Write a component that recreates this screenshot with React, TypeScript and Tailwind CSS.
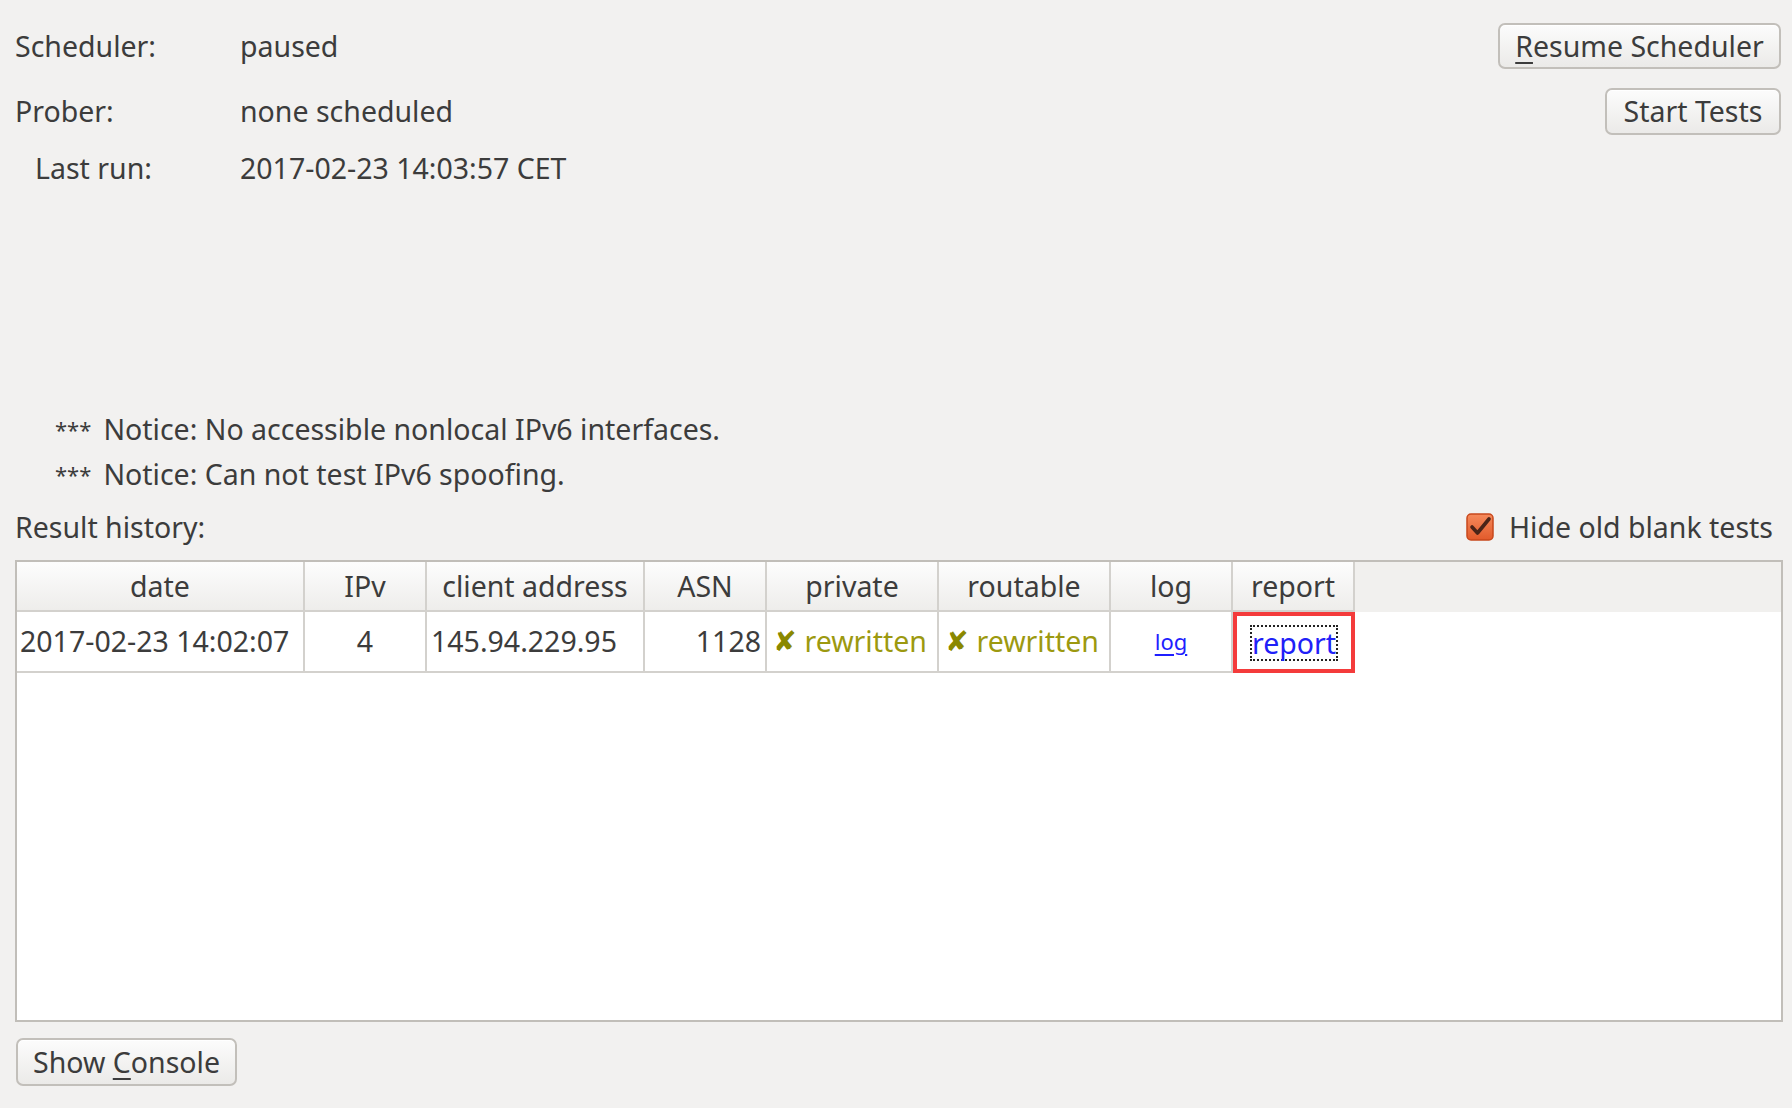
import React from "react";

// ─── 공통 스타일 ───
const FONT = "font-['Noto_Sans','DejaVu_Sans',sans-serif]";

// ─── GtkButton: 둥근 회색 버튼 ───
function GtkButton({ children, className = "" }: { children: React.ReactNode; className?: string }) {
    return (
        <button
            className={`rounded-[7px] border-2 border-[#c2bfba] bg-gradient-to-b from-[#fcfcfc] to-[#ebeae8] text-[28.5px] leading-none text-[#3c3c3c] shadow-[inset_0_1px_0_#ffffff] ${className}`}
        >
            {children}
        </button>
    );
}

// ─── Mnemonic: 밑줄 글자 ───
function M({ c }: { c: string }) {
    return <span className="underline decoration-[2px] underline-offset-[5px]">{c}</span>;
}

// ─── Checkbox ───
function OrangeCheck() {
    return (
        <svg width="30" height="30" viewBox="0 0 30 30">
            <defs>
                <linearGradient id="cb" x1="0" y1="0" x2="0" y2="1">
                    <stop offset="0" stopColor="#f58a5c" />
                    <stop offset="1" stopColor="#e25a2b" />
                </linearGradient>
            </defs>
            <rect x="2" y="2" width="26" height="26" rx="4" fill="url(#cb)" stroke="#c8481c" strokeWidth="1.5" />
            <path d="M7 15 L12.5 21 L24 7" fill="none" stroke="#4a2418" strokeWidth="3.6" strokeLinecap="round" strokeLinejoin="round" />
        </svg>
    );
}

const COLS = [
    { key: "date", w: "w-[288px]" },
    { key: "IPv", w: "w-[122px]" },
    { key: "client address", w: "w-[218px]" },
    { key: "ASN", w: "w-[122px]" },
    { key: "private", w: "w-[172px]" },
    { key: "routable", w: "w-[172px]" },
    { key: "log", w: "w-[122px]" },
    { key: "report", w: "w-[122px]" },
];

function Rewritten() {
    return (
        <span className="flex items-center gap-[8px] text-[#9c990f]">
            <span className="font-['DejaVu_Sans',sans-serif] text-[28px] font-bold leading-none text-[#8a8800]">✘</span>
            <span>rewritten</span>
        </span>
    );
}

function Notice({ text }: { text: string }) {
    return (
        <div className="flex h-[45px] items-center">
            <span className="mr-[12px] text-[22px]">***</span>
            {text}
        </div>
    );
}

export default function App() {
    return (
        <div className={`${FONT} flex h-[1108px] w-[1792px] flex-col bg-[#f2f1f0] text-[28.5px] text-[#3c3c3c]`}>
            {/* 상단: 상태 + 버튼 */}
            <div className="flex justify-between pl-[15px] pr-[11px] pt-[23px]">
                <div className="flex flex-col">
                    <div className="flex h-[46px] items-center">
                        <span className="w-[225px]">Scheduler:</span>
                        <span>paused</span>
                    </div>
                    <div className="mt-[19px] flex h-[47px] items-center">
                        <span className="w-[225px]">Prober:</span>
                        <span>none scheduled</span>
                    </div>
                    <div className="mt-[15px] flex h-[36px] items-center">
                        <span className="w-[225px] pl-[20px]">Last run:</span>
                        <span>2017-02-23 14:03:57 CET</span>
                    </div>
                </div>
                <div className="flex flex-col items-end gap-[19px]">
                    <GtkButton className="h-[46px] w-[283px]">
                        <M c="R" />esume Scheduler
                    </GtkButton>
                    <GtkButton className="h-[47px] w-[176px]">Start Tests</GtkButton>
                </div>
            </div>

            {/* 알림 */}
            <div className="mt-[221px] flex flex-col pl-[55px]">
                <Notice text="Notice: No accessible nonlocal IPv6 interfaces." />
                <Notice text="Notice: Can not test IPv6 spoofing." />
            </div>

            {/* 결과 기록 헤더 */}
            <div className="mt-[10px] flex h-[40px] items-center justify-between pl-[15px] pr-[19px]">
                <span>Result history:</span>
                <label className="flex items-center gap-[14px]">
                    <OrangeCheck />
                    <span>Hide old blank tests</span>
                </label>
            </div>

            {/* 테이블 */}
            <div className="ml-[15px] mt-[13px] flex h-[462px] w-[1768px] flex-col border-2 border-[#c1beb9] bg-white">
                <div className="flex h-[50px] bg-[#f1f0ee]">
                    {COLS.map((c) => (
                        <div
                            key={c.key}
                            className={`${c.w} flex shrink-0 items-center justify-center border-b-2 border-r-2 border-[#d3d1cd] bg-gradient-to-b from-[#fdfdfd] to-[#eeedeb]`}
                        >
                            {c.key}
                        </div>
                    ))}
                </div>
                <div className="flex h-[61px]">
                    <div className="flex w-[288px] shrink-0 items-center border-b-2 border-r-2 border-[#d3d1cd] pl-[3px]">
                        2017-02-23 14:02:07
                    </div>
                    <div className="flex w-[122px] shrink-0 items-center justify-center border-b-2 border-r-2 border-[#d3d1cd]">
                        4
                    </div>
                    <div className="flex w-[218px] shrink-0 items-center border-b-2 border-r-2 border-[#d3d1cd] pl-[4px]">
                        145.94.229.95
                    </div>
                    <div className="flex w-[122px] shrink-0 items-center justify-end border-b-2 border-r-2 border-[#d3d1cd] pr-[4px]">
                        1128
                    </div>
                    <div className="flex w-[172px] shrink-0 items-center border-b-2 border-r-2 border-[#d3d1cd] pl-[6px]">
                        <Rewritten />
                    </div>
                    <div className="flex w-[172px] shrink-0 items-center border-b-2 border-r-2 border-[#d3d1cd] pl-[6px]">
                        <Rewritten />
                    </div>
                    <div className="flex w-[122px] shrink-0 items-center justify-center border-b-2 border-r-2 border-[#d3d1cd]">
                        <span className="text-[22px] text-[#1f1fff] underline decoration-[2px] underline-offset-[4px]">log</span>
                    </div>
                    <div className="flex w-[122px] shrink-0 items-center justify-center border-[4px] border-[#f43b3b]">
                        <span className="border-2 border-dotted border-[#222] leading-[32px] text-[#2020f8]">report</span>
                    </div>
                </div>
            </div>

            {/* 콘솔 버튼 */}
            <div className="mt-[16px] pl-[16px]">
                <GtkButton className="h-[48px] w-[221px]">
                    Show <M c="C" />onsole
                </GtkButton>
            </div>
        </div>
    );
}
